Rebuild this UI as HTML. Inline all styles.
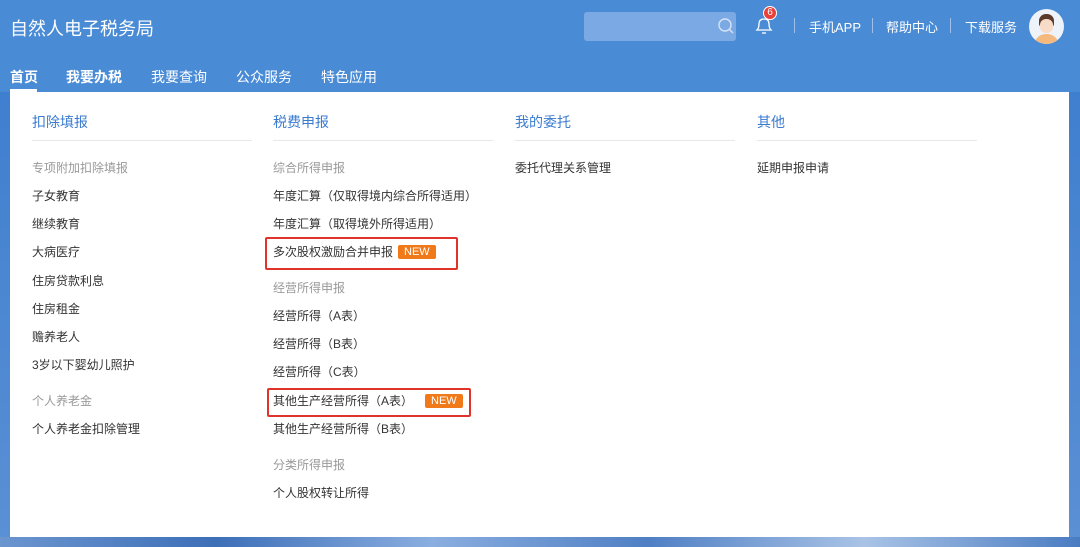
<!DOCTYPE html>
<html><head><meta charset="utf-8"><style>
*{margin:0;padding:0;box-sizing:border-box}
body{width:1080px;height:547px;overflow:hidden;position:relative;font-family:"Liberation Sans","Noto Sans CJK SC",sans-serif;background:linear-gradient(180deg,#4a8bd6 0,#4a8bd6 92px,#3f7fcf 92px,#5b90d4 100%)}
.a{position:absolute;white-space:nowrap}
.w{color:#fff}
.panel{position:absolute;left:10px;top:92px;width:1059px;height:445px;background:#fff}
.h{position:absolute;font-size:14px;color:#3a7bd0;top:112px}
.ln{position:absolute;top:140px;width:220px;height:1px;background:#e8e8e8}
.i{position:absolute;font-size:12px;color:#333;white-space:nowrap;line-height:18px}
.g{color:#999}
.new{display:inline-block;background:#f07a1a;color:#fff;font-size:11px;line-height:14px;padding:0 6px;border-radius:2px;margin-left:5px;vertical-align:1px}
.box{position:absolute;border:2px solid #e0342a;border-radius:2px}
.bot{position:absolute;left:0;top:537px;width:1080px;height:10px;background:linear-gradient(90deg,#6b95cf,#3d6fb8,#8aaee0,#4f7fc4,#a9c3e6,#4a7cc2)}
</style></head><body>
<div class="a w" style="left:10px;top:15px;font-size:18px">自然人电子税务局</div>
<div class="a" style="left:584px;top:12px;width:152px;height:29px;background:#7aa9e4;border-radius:3px"></div>
<svg class="a" style="left:716px;top:16px" width="20" height="20" viewBox="0 0 20 20"><circle cx="9" cy="9" r="6" fill="none" stroke="#d6e4f7" stroke-width="1.4"/><line x1="13.5" y1="13.5" x2="17" y2="17" stroke="#d6e4f7" stroke-width="1.4"/></svg>
<svg class="a" style="left:753px;top:14px" width="22" height="22" viewBox="0 0 22 22"><path d="M4 16 Q6 14 6 10 Q6 5 11 5 Q16 5 16 10 Q16 14 18 16 Z" fill="none" stroke="#fff" stroke-width="1.3"/><line x1="9" y1="19" x2="13" y2="19" stroke="#fff" stroke-width="1.3"/></svg>
<div class="a" style="left:763px;top:6px;width:14px;height:14px;border-radius:7px;background:#e8413a;color:#fff;font-size:10px;text-align:center;line-height:12px;border:1px solid #fff">6</div>
<div class="a" style="left:794px;top:18px;width:1px;height:15px;background:#9fc0ea"></div>
<div class="a w" style="left:809px;top:17px;font-size:13px">手机APP</div>
<div class="a" style="left:872px;top:18px;width:1px;height:15px;background:#9fc0ea"></div>
<div class="a w" style="left:886px;top:17px;font-size:13px">帮助中心</div>
<div class="a" style="left:950px;top:18px;width:1px;height:15px;background:#9fc0ea"></div>
<div class="a w" style="left:965px;top:17px;font-size:13px">下载服务</div>
<div class="a" style="left:1029px;top:9px;width:35px;height:35px;border-radius:50%;background:#eef3fa;overflow:hidden"><div style="position:absolute;left:10px;top:5px;width:15px;height:13px;border-radius:7px 7px 3px 3px;background:#5a3a2a"></div><div style="position:absolute;left:11px;top:10px;width:13px;height:14px;border-radius:6px;background:#f8dcc8"></div><div style="position:absolute;left:5px;top:25px;width:25px;height:14px;border-radius:12px 12px 0 0;background:#f5b97e"></div></div>
<div class="a w" style="left:10px;top:67px;font-size:14px;font-weight:bold">首页</div>
<div class="a" style="left:10px;top:89px;width:27px;height:3px;background:#fff"></div>
<div class="a w" style="left:66px;top:67px;font-size:14px;font-weight:bold">我要办税</div>
<div class="a w" style="left:151px;top:67px;font-size:14px">我要查询</div>
<div class="a w" style="left:236px;top:67px;font-size:14px">公众服务</div>
<div class="a w" style="left:321px;top:67px;font-size:14px">特色应用</div>
<div class="panel"></div>
<div class="h" style="left:32px">扣除填报</div><div class="ln" style="left:32px"></div>
<div class="h" style="left:273px">税费申报</div><div class="ln" style="left:273px"></div>
<div class="h" style="left:515px">我的委托</div><div class="ln" style="left:515px"></div>
<div class="h" style="left:757px">其他</div><div class="ln" style="left:757px"></div>

<div class="i g" style="left:32px;top:159px">专项附加扣除填报</div>
<div class="i" style="left:32px;top:187px">子女教育</div>
<div class="i" style="left:32px;top:215px">继续教育</div>
<div class="i" style="left:32px;top:243px">大病医疗</div>
<div class="i" style="left:32px;top:272px">住房贷款利息</div>
<div class="i" style="left:32px;top:300px">住房租金</div>
<div class="i" style="left:32px;top:328px">赡养老人</div>
<div class="i" style="left:32px;top:356px">3岁以下婴幼儿照护</div>
<div class="i g" style="left:32px;top:392px">个人养老金</div>
<div class="i" style="left:32px;top:420px">个人养老金扣除管理</div>

<div class="i g" style="left:273px;top:159px">综合所得申报</div>
<div class="i" style="left:273px;top:187px">年度汇算（仅取得境内综合所得适用）</div>
<div class="i" style="left:273px;top:215px">年度汇算（取得境外所得适用）</div>
<div class="box" style="left:265px;top:237px;width:193px;height:33px"></div>
<div class="i" style="left:273px;top:243px">多次股权激励合并申报<span class="new">NEW</span></div>
<div class="i g" style="left:273px;top:279px">经营所得申报</div>
<div class="i" style="left:273px;top:307px">经营所得（A表）</div>
<div class="i" style="left:273px;top:335px">经营所得（B表）</div>
<div class="i" style="left:273px;top:363px">经营所得（C表）</div>
<div class="box" style="left:267px;top:388px;width:204px;height:29px"></div>
<div class="i" style="left:273px;top:392px">其他生产经营所得（A表）<span class="new" style="margin-left:12px">NEW</span></div>
<div class="i" style="left:273px;top:420px">其他生产经营所得（B表）</div>
<div class="i g" style="left:273px;top:456px">分类所得申报</div>
<div class="i" style="left:273px;top:484px">个人股权转让所得</div>

<div class="i" style="left:515px;top:159px">委托代理关系管理</div>
<div class="i" style="left:757px;top:159px">延期申报申请</div>
<div class="bot"></div>
</body></html>
